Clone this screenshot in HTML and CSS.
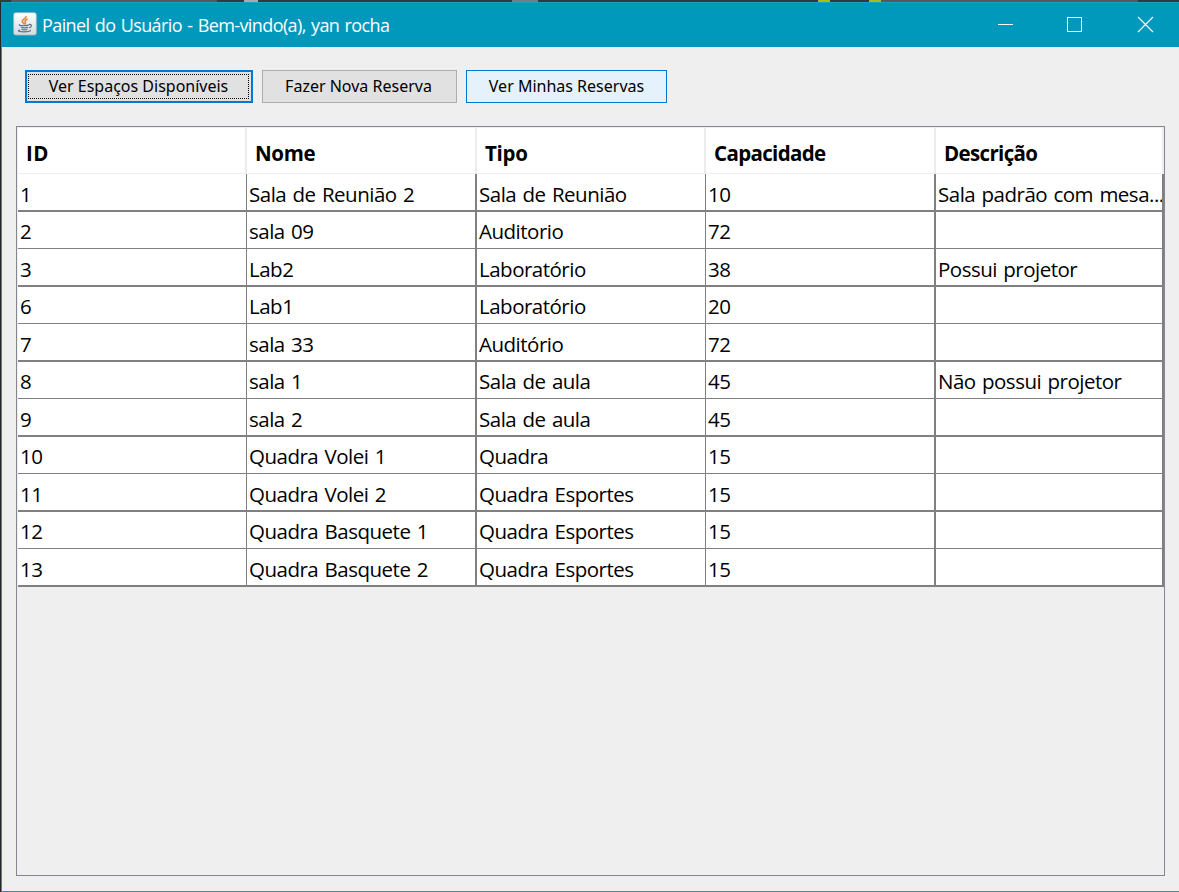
FILE: index.html
```html
<!DOCTYPE html>
<html lang="pt-BR">
<head>
<meta charset="utf-8">
<title>Painel do Usuário</title>
<link rel="stylesheet" href="styles.css">
</head>
<body>
<div class="window">
  <header class="titlebar">
    <svg class="java" width="24" height="24" viewBox="0 0 24 24">
      <defs><linearGradient id="tile" x1="0" y1="0" x2="0" y2="1"><stop offset="0" stop-color="#fff"/><stop offset="1" stop-color="#d5dadd"/></linearGradient></defs>
      <rect x=".7" y=".7" width="22.6" height="22.3" rx="2" fill="url(#tile)" stroke="#a9b9bf" stroke-width=".8"/>
      <path d="M13 4c1 2-4 3.300-3.800 5.400C9.300 10.700 11 11 11 12.400M14.700 7c-1.500.7-3.200 1.600-2.600 2.900.5 1 .8 1.500-.2 2.500" fill="none" stroke="#e8822e" stroke-width="1.500"/>
      <path d="M7.200 12.600c-1.800.5-.8 1.100 3.800 1 2.500 0 4.500-.4 5-.8M8 15.200c1.500.8 5.500.7 7.200 0M8.500 17.200c1.500.8 4.300.8 6 0M16 12.600c3-.8 3.200 2.200.3 3.200M7 18c-3 .8-1.400 1.700 4 1.800 5 0 7.500-.8 6-1.800" fill="none" stroke="#54779a" stroke-width="1.250"/>
    </svg>
    <span class="caption">Painel do Usuário - Bem-vindo(a), yan rocha</span>
    <svg class="controls" width="160" height="20" viewBox="0 0 160 20" fill="none" stroke="#fff" shape-rendering="crispEdges">
      <path d="M0 9.500h15"/>
      <rect x="69.500" y="2.500" width="14" height="14"/>
      <path d="M140 2l15 15M155 2l-15 15" shape-rendering="auto" stroke-width="1.200"/>
    </svg>
  </header>
  <main class="content">
    <nav class="actions">
      <button class="btn focused"><span>Ver Espaços Disponíveis</span></button>
      <button class="btn plain"><span>Fazer Nova Reserva</span></button>
      <button class="btn hover"><span>Ver Minhas Reservas</span></button>
    </nav>
    <section class="scroll">
      <div class="grid head"><div class="id">ID</div><div class="name">Nome</div><div class="name">Tipo</div><div>Capacidade</div><div>Descrição</div></div>
      <div class="grid row"><div>1</div><div>Sala de Reunião 2</div><div>Sala de Reunião</div><div>10</div><div>Sala padrão com mesa...</div></div>
      <div class="grid row"><div>2</div><div>sala 09</div><div>Auditorio</div><div>72</div><div></div></div>
      <div class="grid row"><div>3</div><div>Lab2</div><div>Laboratório</div><div>38</div><div>Possui projetor</div></div>
      <div class="grid row"><div>6</div><div>Lab1</div><div>Laboratório</div><div>20</div><div></div></div>
      <div class="grid row"><div>7</div><div>sala 33</div><div>Auditório</div><div>72</div><div></div></div>
      <div class="grid row"><div>8</div><div>sala 1</div><div>Sala de aula</div><div>45</div><div>Não possui projetor</div></div>
      <div class="grid row"><div>9</div><div>sala 2</div><div>Sala de aula</div><div>45</div><div></div></div>
      <div class="grid row"><div>10</div><div>Quadra Volei 1</div><div>Quadra</div><div>15</div><div></div></div>
      <div class="grid row"><div>11</div><div>Quadra Volei 2</div><div>Quadra Esportes</div><div>15</div><div></div></div>
      <div class="grid row"><div>12</div><div>Quadra Basquete 1</div><div>Quadra Esportes</div><div>15</div><div></div></div>
      <div class="grid row"><div>13</div><div>Quadra Basquete 2</div><div>Quadra Esportes</div><div>15</div><div></div></div>
    </section>
  </main>
</div>
</body>
</html>
```
FILE: styles.css
```css
* { box-sizing: border-box; }
body {
  margin: 0;
  width: 1179px;
  height: 892px;
  overflow: hidden;
  padding: 2px 0 0 1px;
  background: linear-gradient(90deg, #33393d 0 11px, #55595c 11px 217px, #33393d 217px 244px, #aaa 244px 258px, #33393d 258px 512px, #777d80 512px 538px, #33393d 538px 818px, #a3bd28 818px 830px, #33393d 830px 869px, #a3bd28 869px 881px, #55595c 881px 1138px, #33393d 1138px) 0 0 / 100% 2px no-repeat, #25282b;
  font-family: "Open Sans", "Noto Sans", sans-serif;
}
.window {
  height: 890px;
  display: flex;
  flex-direction: column;
  background: #efefef;
  border-left: 1px solid #1a9ab5;
  border-bottom: 1px solid #1a9ab5;
}
.titlebar {
  height: 45px;
  margin-left: -1px;
  flex: none;
  display: flex;
  align-items: center;
  background: #0099bc;
  border-top: 1px solid #1a9fbf;
  color: #fff;
  padding-left: 12px;
}
.java { margin-top: -3px; }
.caption {
  margin-left: 5px;
  font-size: 18px;
  line-height: 24px;
  letter-spacing: -0.6px;
  word-spacing: 1.2px;
  white-space: nowrap;
}
.controls { margin: -1px 21px 0 auto; }
.content {
  flex: 1;
  display: flex;
  flex-direction: column;
  padding: 23px 14px 15px;
}
.actions { display: flex; gap: 9px; padding-left: 9px; height: 33px; }
.btn {
  padding: 0;
  border: 1px solid #adadad;
  background: #e1e1e1;
  color: #000;
  font-family: "Noto Sans", sans-serif;
  font-size: 16px;
  line-height: 25px;
  white-space: nowrap;
}
.focused { width: 228px; border: 2px solid #0078d7; padding: 2px 2px 2px 1px; }
.focused span { display: block; height: 25px; line-height: 23px; border: 1px dotted #000; }
.plain { width: 195px; padding-right: 2px; }
.hover { width: 201px; background: #e5f1fb; border-color: #0078d7; }
.scroll {
  flex: 1;
  margin-top: 23px;
  border: 1px solid #828790;
  padding: 1px 0 0 1px;
}
.grid {
  display: grid;
  grid-template-columns: 229px 230px 229px 230px 228px;
  background: #fff;
}
.grid div { white-space: nowrap; overflow: hidden; }
.head {
  height: 46px;
  border-bottom: 1px solid #efefef;
  font-weight: 700;
  font-size: 20.5px;
  letter-spacing: -0.65px;
  line-height: 51px;
}
.head div { padding-left: 8px; border-right: 2px solid #ececec; }
.head .id { letter-spacing: 0.4px; }
.head .name { letter-spacing: -0.3px; }
.row {
  height: 38px;
  font-size: 20.5px;
  letter-spacing: -0.5px;
  word-spacing: 1.5px;
  line-height: 41px;
}
.row div { padding-left: 2px; border-right: 1px solid #808080; border-bottom: 2px solid #808080; }
.row:nth-child(odd) { height: 37px; line-height: 39px; }
.row:nth-child(odd) div { border-bottom-width: 1px; }
.row div:nth-child(even), .row div:last-child { border-right-width: 2px; }
```
